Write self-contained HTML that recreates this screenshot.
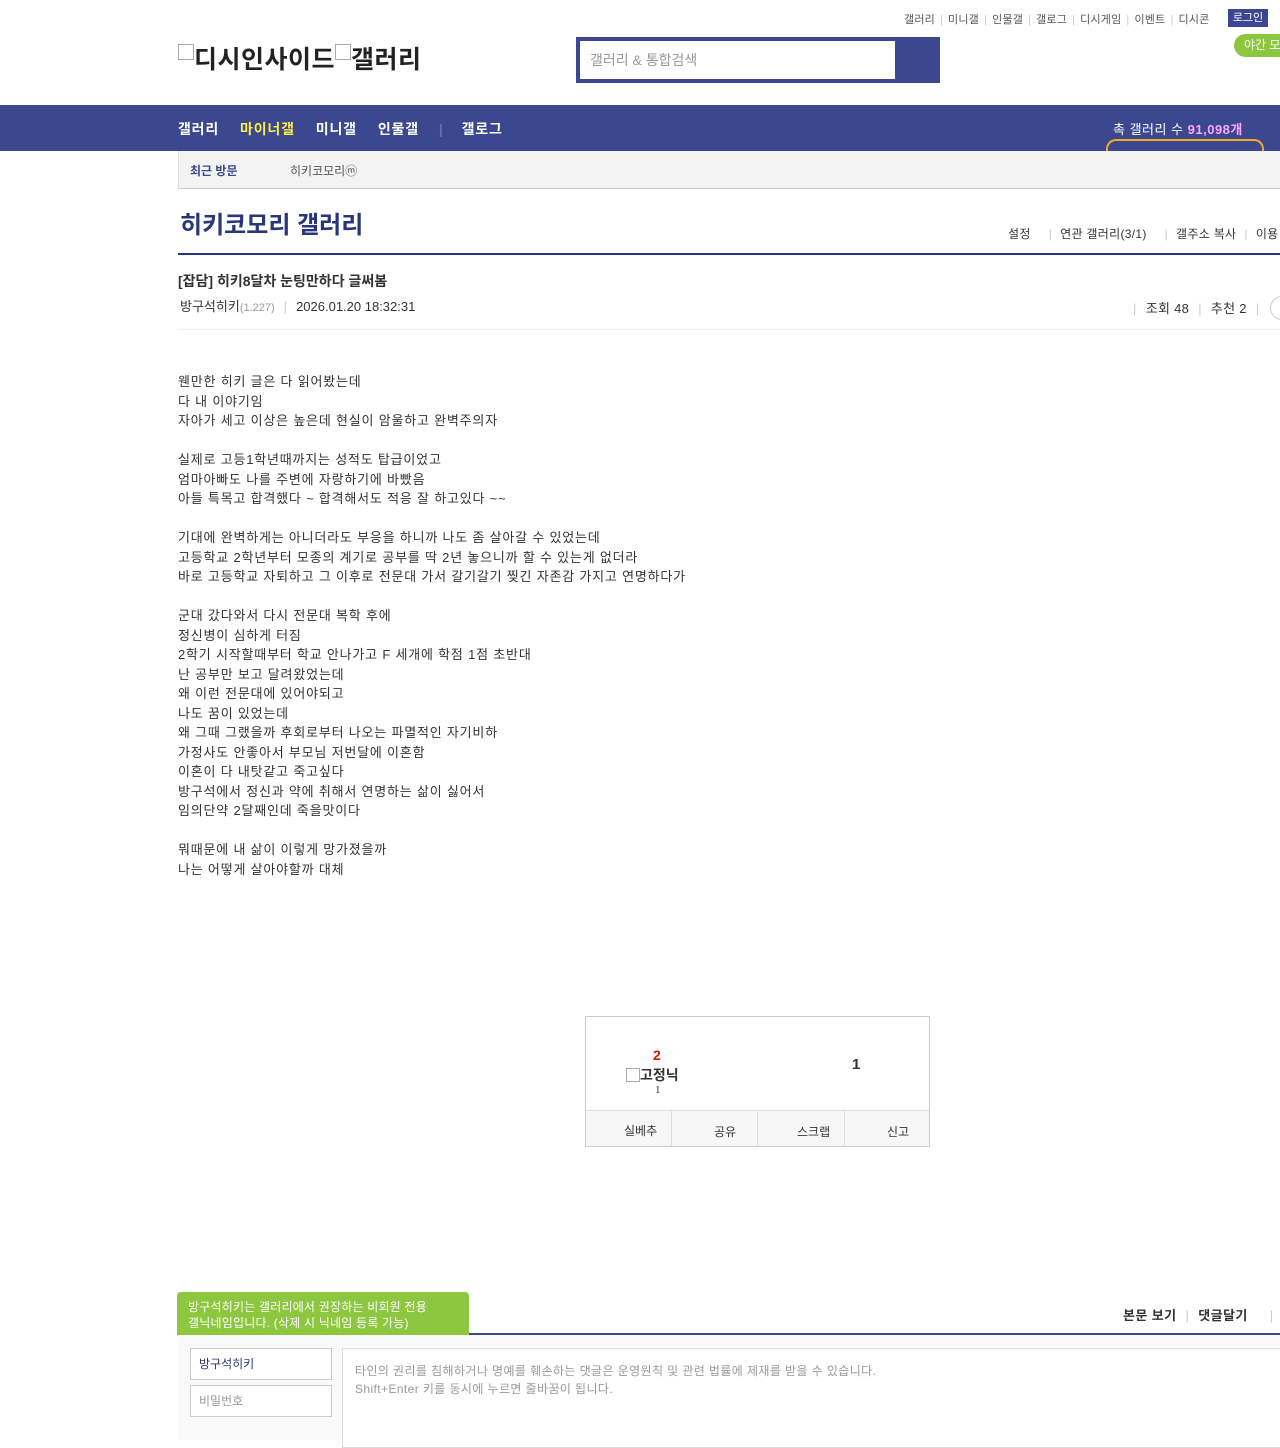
<!DOCTYPE html>
<html><head><meta charset="utf-8"><style>
*{margin:0;padding:0;box-sizing:border-box}
body{width:1280px;height:1440px;overflow:hidden;background:#fff;font-family:"Liberation Sans","Noto Sans CJK KR",sans-serif;color:#333;position:relative}
.a{position:absolute;white-space:nowrap}
.top{font-size:11px;color:#555;top:11px;left:904px;letter-spacing:0.2px}
.top span{color:#ccc;margin:0 5px}
</style></head><body>
<div class="a top">갤러리<span>|</span>미니갤<span>|</span>인물갤<span>|</span>갤로그<span>|</span>디시게임<span>|</span>이벤트<span>|</span>디시콘</div>
<div class="a" style="left:1228px;top:9px;width:40px;height:18px;background:#3b4890;color:#fff;font-size:11px;line-height:18px;text-align:center">로그인</div>
<div class="a" style="left:1234px;top:34px;width:60px;height:23px;background:#8dc63f;border-radius:12px;color:#fff;font-size:12px;line-height:23px;padding-left:10px">야간 모드</div>
<div class="a" style="left:178px;top:40px;font-size:25px;font-weight:bold;color:#222;letter-spacing:0.5px"><span style="display:inline-block;width:16px;height:16px;border:1px solid #aaa;vertical-align:8px"></span>디시인사이드<span style="display:inline-block;width:16px;height:16px;border:1px solid #aaa;vertical-align:8px"></span>갤러리</div>
<div class="a" style="left:576px;top:37px;width:364px;height:46px;background:#3b4890"></div>
<div class="a" style="left:580px;top:41px;width:315px;height:38px;background:#fff;font-size:14px;color:#999;line-height:38px;padding-left:10px">갤러리 &amp; 통합검색</div>
<div class="a" style="left:0;top:105px;width:1280px;height:46px;background:#3b4890"></div>
<div class="a" style="left:178px;top:119px;font-size:14px;font-weight:bold;color:#fff;letter-spacing:0.8px">갤러리<span style="color:#ffed45;margin-left:21px">마이너갤</span><span style="margin-left:21px">미니갤</span><span style="margin-left:21px">인물갤</span><span style="color:#6670a8;margin:0 18px 0 20px">|</span>갤로그</div>
<div class="a" style="left:1113px;top:119px;font-size:13px;color:#fff;letter-spacing:0.5px">촉 갤러리 수 <b style="color:#ffa4ff">91,098개</b></div>
<div class="a" style="left:1106px;top:139px;width:158px;height:20px;border:2px solid #f5a623;border-bottom:none;border-radius:10px 10px 0 0;background:#3b4890"></div>
<div class="a" style="left:178px;top:151px;width:1102px;height:38px;background:#f3f3f3;border-left:1px solid #ddd;border-bottom:1px solid #ccc"></div>
<div class="a" style="left:190px;top:162px;font-size:12px;font-weight:bold;color:#3b4890">최근 방문</div>
<div class="a" style="left:290px;top:162px;font-size:12px;color:#555">히키코모리ⓜ</div>
<div class="a" style="left:180px;top:205px;font-size:24px;font-weight:bold;color:#29367c">히키코모리 갤러리</div>
<div class="a" style="left:1008px;top:225px;font-size:12px;color:#333;letter-spacing:0.3px">설정<span style="color:#ccc;margin:0 8px 0 18px">|</span>연관 갤러리(3/1)<span style="color:#ccc;margin:0 8px 0 18px">|</span>갤주소 복사<span style="color:#ccc;margin:0 8px">|</span>이용</div>
<div class="a" style="left:178px;top:253px;width:1102px;height:2px;background:#29367c"></div>
<div class="a" style="left:178px;top:271px;font-size:14px;font-weight:bold;color:#333">[잡담] 히키8달차 눈팅만하다 글써봄</div>
<div class="a" style="left:180px;top:296px;font-size:13px;color:#333">방구석히키<span style="font-size:11px;color:#999">(1.227)</span><span style="color:#ccc;margin:0 9px">|</span>2026.01.20 18:32:31</div>
<div class="a" style="left:1133px;top:298px;font-size:13px;color:#333;letter-spacing:0.3px"><span style="color:#ccc;margin-right:9px">|</span>조회 48<span style="color:#ccc;margin:0 9px">|</span>추천 2<span style="color:#ccc;margin:0 9px">|</span></div>
<div class="a" style="left:1270px;top:296px;width:24px;height:24px;border:1px solid #ccc;border-radius:12px"></div>
<div class="a" style="left:178px;top:329px;width:1102px;height:1px;background:#eee"></div>
<div class="a" style="left:178px;top:372px;font-size:13px;line-height:19.5px;color:#333;letter-spacing:0.8px">웬만한 히키 글은 다 읽어봤는데<br>다 내 이야기임<br>자아가 세고 이상은 높은데 현실이 암울하고 완벽주의자<br><br>실제로 고등1학년때까지는 성적도 탑급이었고<br>엄마아빠도 나를 주변에 자랑하기에 바빴음<br>아들 특목고 합격했다 ~ 합격해서도 적응 잘 하고있다 ~~<br><br>기대에 완벽하게는 아니더라도 부응을 하니까 나도 좀 살아갈 수 있었는데<br>고등학교 2학년부터 모종의 계기로 공부를 딱 2년 놓으니까 할 수 있는게 없더라<br>바로 고등학교 자퇴하고 그 이후로 전문대 가서 갈기갈기 찢긴 자존감 가지고 연명하다가<br><br>군대 갔다와서 다시 전문대 복학 후에<br>정신병이 심하게 터짐<br>2학기 시작할때부터 학교 안나가고 F 세개에 학점 1점 초반대<br>난 공부만 보고 달려왔었는데<br>왜 이런 전문대에 있어야되고<br>나도 꿈이 있었는데<br>왜 그때 그랬을까 후회로부터 나오는 파멸적인 자기비하<br>가정사도 안좋아서 부모님 저번달에 이혼함<br>이혼이 다 내탓같고 죽고싶다<br>방구석에서 정신과 약에 취해서 연명하는 삶이 싫어서<br>임의단약 2달째인데 죽을맛이다<br><br>뭐때문에 내 삶이 이렇게 망가졌을까<br>나는 어떻게 살아야할까 대체</div>
<div class="a" style="left:585px;top:1016px;width:345px;height:131px;border:1px solid #ccc"></div>
<div class="a" style="left:586px;top:1110px;width:343px;height:36px;background:#f7f7f7;border-top:1px solid #ddd"></div>
<div class="a" style="left:671px;top:1111px;width:1px;height:35px;background:#ddd"></div>
<div class="a" style="left:757px;top:1111px;width:1px;height:35px;background:#ddd"></div>
<div class="a" style="left:844px;top:1111px;width:1px;height:35px;background:#ddd"></div>
<div class="a" style="left:653px;top:1047px;font-size:14px;font-weight:bold;color:#d31900">2</div>
<div class="a" style="left:626px;top:1065px;font-size:14px;font-weight:bold;color:#333"><span style="display:inline-block;width:14px;height:14px;border:1px solid #aaa;vertical-align:-2px"></span>고정닉</div>
<div class="a" style="left:655px;top:1084px;font-size:11px;color:#333;font-family:'Liberation Serif',serif">1</div>
<div class="a" style="left:852px;top:1056px;font-size:15px;font-weight:bold;color:#333">1</div>
<div class="a" style="left:624px;top:1122px;font-size:12px;color:#333">실베추</div>
<div class="a" style="left:714px;top:1123px;font-size:12px;color:#333">공유</div>
<div class="a" style="left:797px;top:1123px;font-size:12px;color:#333">스크랩</div>
<div class="a" style="left:887px;top:1123px;font-size:12px;color:#333">신고</div>
<div class="a" style="left:177px;top:1292px;width:292px;height:46px;background:#8dc63f;border-radius:4px;color:#fff;font-size:12px;line-height:16px;padding:7px 11px;letter-spacing:0.2px">방구석히키는 갤러리에서 권장하는 비회원 전용<br>갤닉네임입니다. (삭제 시 닉네임 등록 가능)</div>
<div class="a" style="left:188px;top:1337px;width:0;height:0;border-left:4px solid transparent;border-right:4px solid transparent;border-top:6px solid #8dc63f"></div>
<div class="a" style="left:1123px;top:1305px;font-size:13px;font-weight:bold;color:#333;letter-spacing:0.4px">본문 보기<span style="color:#ccc;font-weight:normal;margin:0 9px">|</span>댓글달기<span style="color:#ccc;font-weight:normal;margin-left:22px">|</span></div>
<div class="a" style="left:469px;top:1333px;width:811px;height:2px;background:#3b4890"></div>
<div class="a" style="left:178px;top:1335px;width:1102px;height:105px;background:#f9f9f9"></div>
<div class="a" style="left:190px;top:1348px;width:142px;height:32px;border:1px solid #ccc;background:#fff;font-size:12px;color:#29367c;line-height:30px;padding-left:8px">방구석히키</div>
<div class="a" style="left:190px;top:1385px;width:142px;height:32px;border:1px solid #ccc;background:#fff;font-size:12px;color:#999;line-height:30px;padding-left:8px">비밀번호</div>
<div class="a" style="left:342px;top:1348px;width:940px;height:100px;border:1px solid #ddd;background:#fff;font-size:12px;color:#999;line-height:18px;padding:13px 12px;letter-spacing:0.4px">타인의 권리를 침해하거나 명예를 훼손하는 댓글은 운영원칙 및 관련 법률에 제재를 받을 수 있습니다.<br>Shift+Enter 키를 동시에 누르면 줄바꿈이 됩니다.</div>
</body></html>
